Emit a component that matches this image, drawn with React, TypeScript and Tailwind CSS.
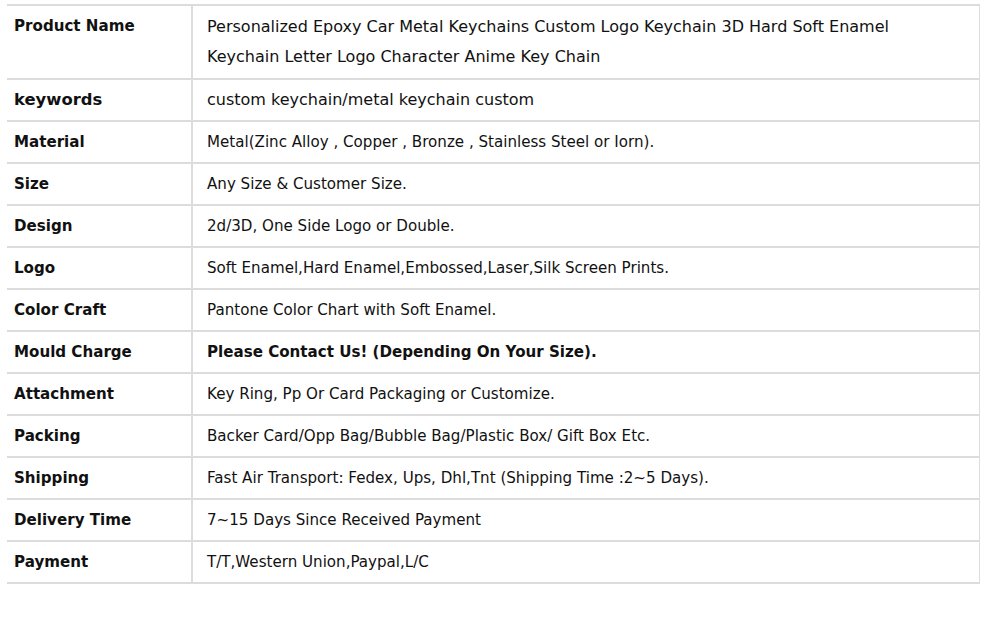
const rows: { label: string; value: string; bold?: boolean; big?: boolean }[] = [
  {
    label: "Product Name",
    value:
      "Personalized Epoxy Car Metal Keychains Custom Logo Keychain 3D Hard Soft Enamel Keychain Letter Logo Character Anime Key Chain",
    big: true,
  },
  { label: "keywords", value: "custom keychain/metal keychain custom", big: true },
  { label: "Material", value: "Metal(Zinc Alloy , Copper , Bronze , Stainless Steel or Iorn)." },
  { label: "Size", value: "Any Size & Customer Size." },
  { label: "Design", value: "2d/3D, One Side Logo or Double." },
  { label: "Logo", value: "Soft Enamel,Hard Enamel,Embossed,Laser,Silk Screen Prints." },
  { label: "Color Craft", value: "Pantone Color Chart with Soft Enamel." },
  { label: "Mould Charge", value: "Please Contact Us! (Depending On Your Size).", bold: true },
  { label: "Attachment", value: "Key Ring, Pp Or Card Packaging or Customize." },
  { label: "Packing", value: "Backer Card/Opp Bag/Bubble Bag/Plastic Box/ Gift Box Etc." },
  { label: "Shipping", value: "Fast Air Transport: Fedex, Ups, Dhl,Tnt (Shipping Time :2~5 Days)." },
  { label: "Delivery Time", value: "7~15 Days Since Received Payment" },
  { label: "Payment", value: "T/T,Western Union,Paypal,L/C" },
];

export default function App() {
  return (
    <div className="min-h-[640px] w-[1000px] bg-white pt-[4px] pl-[7px] font-['DejaVu_Sans',sans-serif] text-[#111]">
      <table className="w-[973px] border-collapse">
        <tbody>
          {rows.map((r, i) => (
            <tr key={r.label} className={i === 0 ? "h-[74px]" : "h-[42px]"}>
              <td
                className={
                  "w-[185px] border-t-2 border-b-2 border-r-2 border-[#dcdcdc] px-[7px] " +
                  (i === 0 ? "align-top pt-[8px]" : "align-middle")
                }
              >
                <span className={i === 1 ? "text-[16.4px] font-bold" : "text-[15.1px] font-bold"}>
                  {r.label}
                </span>
              </td>
              <td className="border-t-2 border-b-2 border-r border-[#dcdcdc] pl-[14px] pr-[10px] align-middle">
                <div
                  className={
                    (r.big ? "max-w-[700px] text-[16px] leading-[30px]" : "text-[15.1px]") +
                    (r.bold ? " font-bold" : "")
                  }
                >
                  {r.value}
                </div>
              </td>
            </tr>
          ))}
        </tbody>
      </table>
    </div>
  );
}
